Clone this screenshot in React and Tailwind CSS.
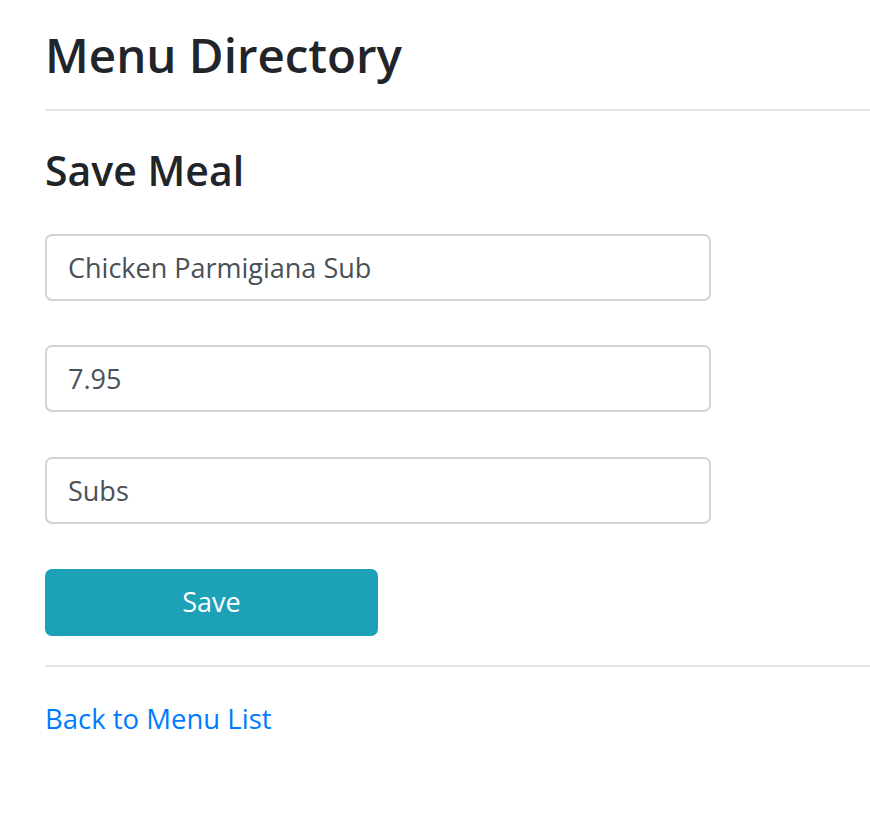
import React, { useState } from "react";

const inputClass =
  "block w-[666px] h-[67px] rounded-[7px] border-2 border-[#ced4da] bg-white px-[21px] text-[27px] text-[#495057] outline-none";

const App = () => {
  const [name, setName] = useState("Chicken Parmigiana Sub");
  const [price, setPrice] = useState("7.95");
  const [category, setCategory] = useState("Subs");

  const handleSave = (e) => {
    e.preventDefault();
  };

  return (
    <main
      className="min-h-screen w-full bg-white pl-[45px] text-[#212529]"
      style={{ fontFamily: '"Open Sans", "Noto Sans", sans-serif' }}
    >
      <h1 className="pt-[21px] text-[47.5px] font-semibold leading-[67px]">
        Menu Directory
      </h1>
      <hr className="mt-[21px] border-0 border-t-2 border-[#e6e6e6]" />

      <form onSubmit={handleSave}>
        <h3 className="mt-[30px] text-[41px] font-semibold leading-[58px]">
          Save Meal
        </h3>

        <div className="mt-[35px] flex flex-col">
          <input
            type="text"
            value={name}
            onChange={(e) => setName(e.target.value)}
            className={inputClass}
          />
          <input
            type="text"
            value={price}
            onChange={(e) => setPrice(e.target.value)}
            className={`${inputClass} mt-[44px]`}
          />
          <input
            type="text"
            value={category}
            onChange={(e) => setCategory(e.target.value)}
            className={`${inputClass} mt-[45px]`}
          />
          <button
            type="submit"
            className="mt-[45px] h-[67px] w-[333px] rounded-[7px] bg-[#1ca1b6] text-[27px] text-white"
          >
            Save
          </button>
        </div>
      </form>

      <hr className="mt-[29px] border-0 border-t-2 border-[#e6e6e6]" />

      <a href="#" className="mt-[32px] block text-[27.5px] leading-[40px] text-[#007bff]">
        Back to Menu List
      </a>
    </main>
  );
};

export default App;
